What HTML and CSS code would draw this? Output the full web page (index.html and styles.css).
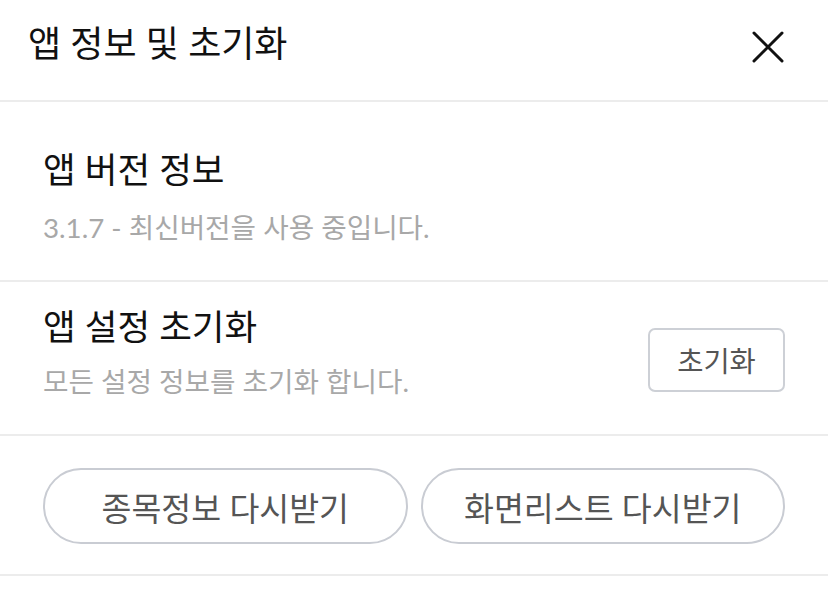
FILE: index.html
```html
<html>
<head>
	<meta charset="utf-8">
	<link rel="stylesheet" href="styles.css">
</head>
<body>
	<div class='header'>
		<div class='title'>앱 정보 및 초기화</div>
		<div class='close'>
			<svg width="32" height="32" viewBox="0 0 32 32">
				<path d="M2 2 L30 30 M30 2 L2 30" stroke="#111" stroke-width="3" stroke-linecap="round" fill="none"/>
			</svg>
		</div>
	</div>

	<div class='section version'>
		<div class='info'>
			<div class='name'>앱 버전 정보</div>
			<div class='desc'>3.1.7 - 최신버전을 사용 중입니다.</div>
		</div>
	</div>

	<div class='section reset'>
		<div class='info'>
			<div class='name'>앱 설정 초기화</div>
			<div class='desc'>모든 설정 정보를 초기화 합니다.</div>
		</div>
		<button class='btn'>초기화</button>
	</div>

	<div class='section actions'>
		<button class='pill'>종목정보 다시받기</button>
		<button class='pill'>화면리스트 다시받기</button>
	</div>
</body>
</html>
```

FILE: styles.css
```css
html {
	box-sizing: border-box;
}
*, *:before, *:after {
	box-sizing: inherit;
}
body {
	margin: 0;
	font-family: Lato, 'Noto Sans CJK KR', sans-serif;
	background: #fff;
	color: #111;
}
.header {
	height: 102px;
	display: flex;
	align-items: center;
	justify-content: space-between;
	padding: 0 44px 14px 28px;
	border-bottom: 2px solid #ececec;
}
.header .title {
	font-size: 36px;
	line-height: 44px;
}
.header .close {
	display: flex;
	margin-top: 8px;
}
.section {
	display: flex;
	align-items: center;
	justify-content: space-between;
	padding: 0 43px;
	border-bottom: 2px solid #ececec;
}
.section.version {
	height: 180px;
	padding-top: 12px;
}
.section.reset {
	height: 154px;
	padding-bottom: 11px;
}
.section.actions {
	height: 140px;
	gap: 13px;
	padding-top: 2px;
}
.info .name {
	font-size: 35.5px;
	line-height: 44px;
}
.info .desc {
	font-size: 27.7px;
	color: #a8a8a8;
	line-height: 36px;
	margin-top: 18px;
}
.reset .info .desc {
	margin-top: 15px;
}
button {
	font-family: inherit;
	background: #fff;
	color: #555;
	cursor: pointer;
}
.btn {
	width: 137px;
	height: 64px;
	border: 2px solid #cdd0d6;
	border-radius: 7px;
	font-size: 28.5px;
	margin-top: 14px;
}
.pill {
	flex: 1;
	height: 76px;
	border: 2px solid #c9ccd3;
	border-radius: 38px;
	font-size: 32.5px;
}
```
